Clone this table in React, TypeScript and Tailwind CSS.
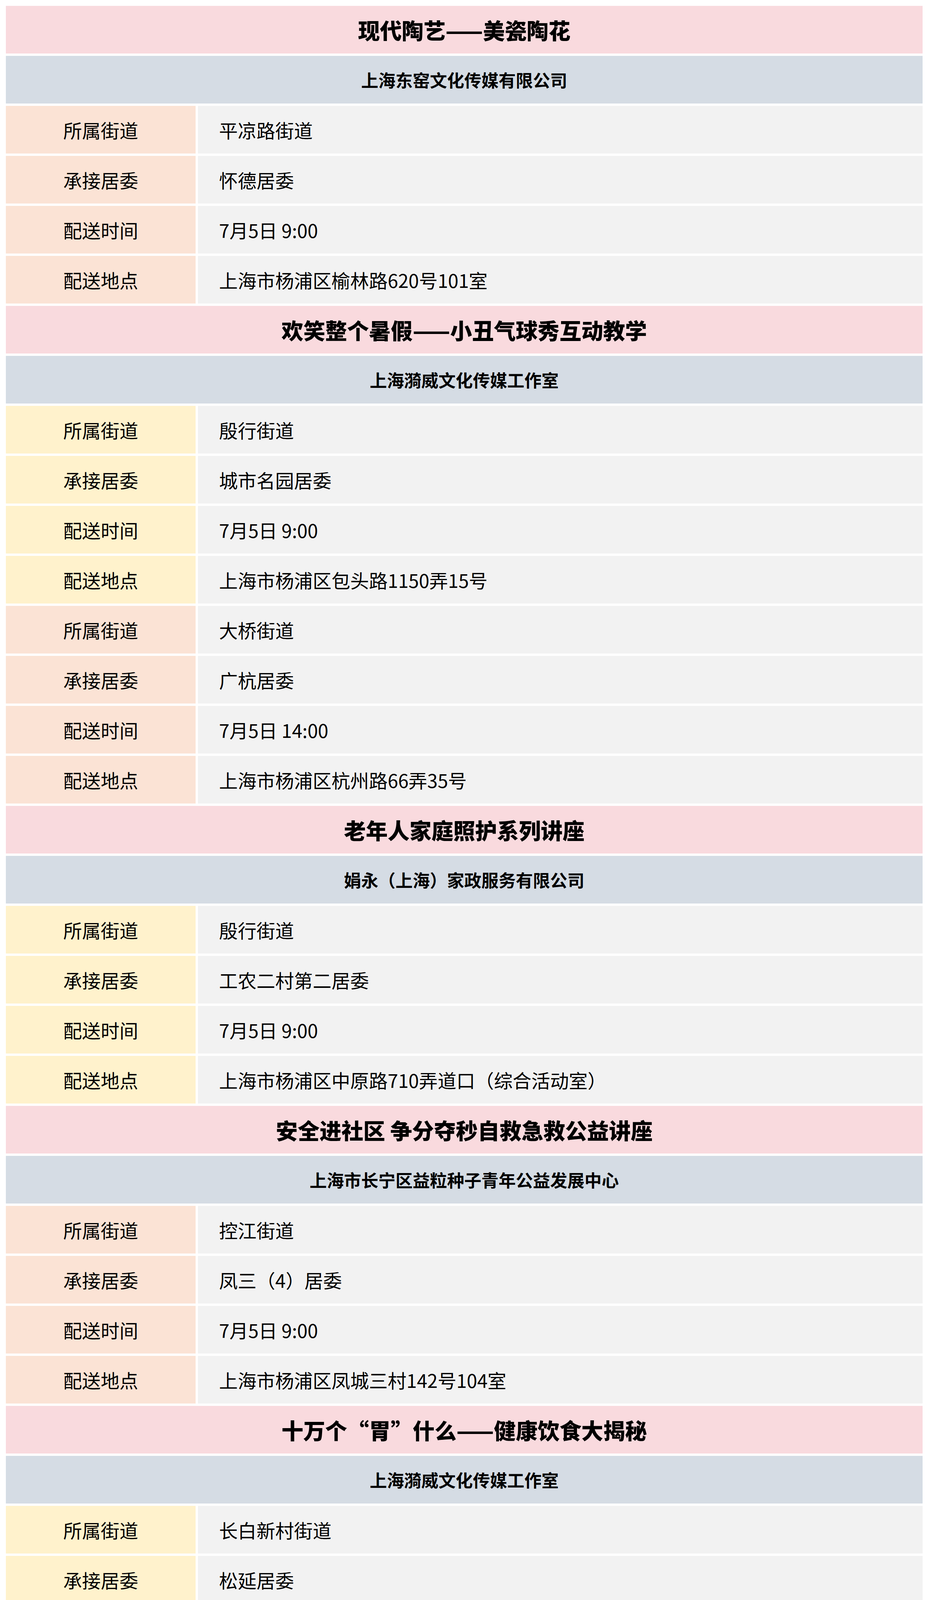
type Detail = {
  street: string;
  hostLabel?: string;
  host: string;
  time: string;
  place: string;
};

type Section = {
  title: string;
  company: string;
  groups: Detail[];
};

const sections: Section[] = [
  {
    title: '现代陶艺——美瓷陶花',
    company: '上海东窑文化传媒有限公司',
    groups: [
      { street: '平凉路街道', host: '怀德居委', time: '7月5日 9:00', place: '上海市杨浦区榆林路620号101室' },
    ],
  },
  {
    title: '欢笑整个暑假——小丑气球秀互动教学',
    company: '上海漪威文化传媒工作室',
    groups: [
      { street: '殷行街道', host: '城市名园居委', time: '7月5日 9:00', place: '上海市杨浦区包头路1150弄15号' },
      { street: '大桥街道', host: '广杭居委', time: '7月5日 14:00', place: '上海市杨浦区杭州路66弄35号' },
    ],
  },
  {
    title: '老年人家庭照护系列讲座',
    company: '娟永（上海）家政服务有限公司',
    groups: [
      { street: '殷行街道', host: '工农二村第二居委', time: '7月5日 9:00', place: '上海市杨浦区中原路710弄道口（综合活动室）' },
    ],
  },
  {
    title: '安全进社区 争分夺秒自救急救公益讲座',
    company: '上海市长宁区益粒种子青年公益发展中心',
    groups: [
      { street: '控江街道', host: '凤三（4）居委', time: '7月5日 9:00', place: '上海市杨浦区凤城三村142号104室' },
    ],
  },
  {
    title: '十万个“胃”什么——健康饮食大揭秘',
    company: '上海漪威文化传媒工作室',
    groups: [
      { street: '长白新村街道', host: '松延居委', time: '7月5日 9:00', place: '上海市杨浦区延吉东路5弄12号1临' },
    ],
  },
  {
    title: '中医食疗养生',
    company: '上海传远文化旅游集团有限公司',
    groups: [
      { street: '长海路街道', host: '国和路第一居委', time: '7月5日 9:10', place: '上海市杨浦区国和路610弄25号' },
    ],
  },
  {
    title: '少儿专注力训练课——轻松做学霸',
    company: '上海静听文化传播有限公司',
    groups: [
      { street: '新江湾城街道', hostLabel: '承接单位', host: '新江湾城社区文化活动中心', time: '7月6日 9:30', place: '上海市杨浦区国秀路700号' },
    ],
  },
];

const PEACH = 'bg-[#fbe3d5]';
const YELLOW = 'bg-[#fff2cc]';

function Row({ label, value, tone }: { label: string; value: string; tone: string }) {
  return (
    <div className="flex h-[122px] gap-[6px]">
      <div className={`flex w-[486px] shrink-0 items-center justify-center ${tone}`}>
        <span className="text-[48px] leading-none">{label}</span>
      </div>
      <div className="flex flex-1 items-center bg-[#f2f2f2] pl-[54px]">
        <span className="text-[48px] leading-none">{value}</span>
      </div>
    </div>
  );
}

export default function App() {
  let groupIndex = 0;

  return (
    <div
      className="bg-white pb-[15px] pl-[15px] pr-[19px] pt-[15px] text-black"
      style={{ fontFamily: '"Noto Sans CJK SC", "Noto Sans", sans-serif' }}
    >
      <div className="flex flex-col gap-[6px]">
        {sections.map((s) => (
          <div key={s.title} className="flex flex-col gap-[6px]">
            <div className="flex h-[122px] items-center justify-center bg-[#f9dade]">
              <span className="text-[56px] font-black leading-none">{s.title}</span>
            </div>
            <div className="flex h-[122px] items-center justify-center bg-[#d5dce4]">
              <span className="text-[44px] font-bold leading-none">{s.company}</span>
            </div>
            {s.groups.map((g) => {
              // label colour alternates per group: peach, yellow, peach...
              const tone = groupIndex++ % 2 === 0 ? PEACH : YELLOW;
              return (
                <div key={g.place} className="flex flex-col gap-[6px]">
                  <Row label="所属街道" value={g.street} tone={tone} />
                  <Row label={g.hostLabel ?? '承接居委'} value={g.host} tone={tone} />
                  <Row label="配送时间" value={g.time} tone={tone} />
                  <Row label="配送地点" value={g.place} tone={tone} />
                </div>
              );
            })}
          </div>
        ))}
      </div>
    </div>
  );
}
